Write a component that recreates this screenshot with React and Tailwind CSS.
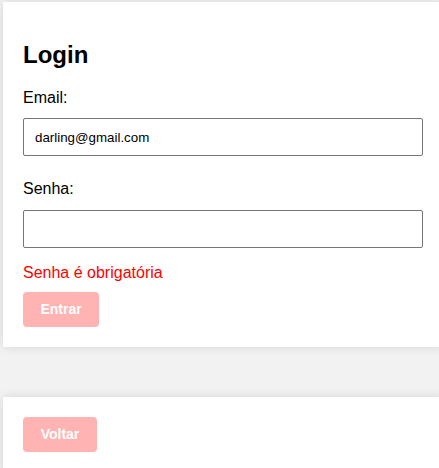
import React, { useState } from "react";

const Login = () => {
  const [email, setEmail] = useState("darling@gmail.com");
  const [senha, setSenha] = useState("");

  return (
    <div className="w-[440px] bg-white p-5 shadow-[0_0_10px_rgba(0,0,0,0.12)]">
      <h2 className="mt-[19px] mb-5 text-[24px] font-bold leading-[28px] text-black">Login</h2>

      <label htmlFor="email" className="mb-[11px] block text-[16px] leading-[18px] text-black">
        Email:
      </label>
      <input
        id="email"
        type="email"
        value={email}
        onChange={(e) => setEmail(e.target.value)}
        className="block h-[38px] w-[400px] rounded-[2px] border border-[#767676] px-[11px] text-[13.33px] text-black outline-none"
      />

      <label htmlFor="senha" className="mt-6 mb-3 block text-[16px] leading-[18px] text-black">
        Senha:
      </label>
      <input
        id="senha"
        type="password"
        value={senha}
        onChange={(e) => setSenha(e.target.value)}
        className="block h-[38px] w-[400px] rounded-[2px] border border-[#767676] px-[11px] text-[13.33px] outline-none"
      />

      {/* mensagem de erro */}
      <p className="mt-[16px] text-[16px] leading-[18px] text-[#ff0000]">Senha é obrigatória</p>

      <button
        disabled
        className="mt-[10px] h-[35px] w-[76px] rounded-[4px] bg-[#ffb3b3] text-[14px] font-bold text-white"
      >
        Entrar
      </button>
    </div>
  );
};

export default function App() {
  return (
    <div
      className="min-h-[468px] bg-[#f2f2f2] pt-[2px] pl-[3px]"
      style={{ fontFamily: '"Liberation Sans", Arial, sans-serif' }}
    >
      <Login />

      <div className="mt-[50px] w-[440px] bg-white p-5 pb-6 shadow-[0_0_10px_rgba(0,0,0,0.12)]">
        <button className="h-[35px] w-[74px] rounded-[4px] bg-[#ffb3b3] text-[14px] font-bold text-white">
          Voltar
        </button>
      </div>
    </div>
  );
}
